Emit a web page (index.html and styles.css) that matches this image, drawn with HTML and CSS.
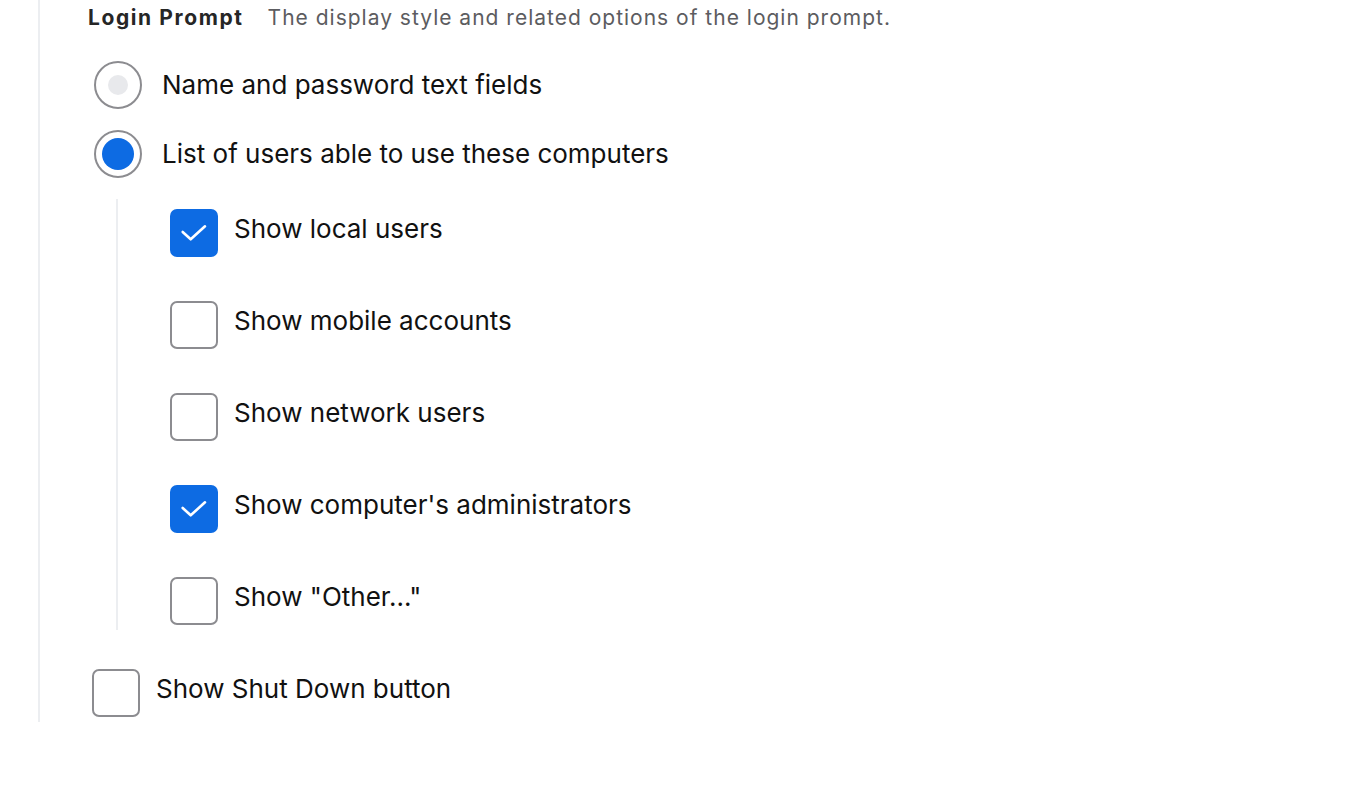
FILE: index.html
```html
<!DOCTYPE html>
<html lang="en">
<head>
    <meta charset="UTF-8">
    <title>Login Prompt</title>
    <link rel="stylesheet" href="styles.css">
</head>
<body>
    <div class="panel">
        <div class="section-head">
            <span class="section-title">Login Prompt</span>
            <span class="section-desc">The display style and related options of the login prompt.</span>
        </div>

        <div class="radio-list">
            <label class="radio-row">
                <span class="radio"><span class="dot"></span></span>
                <span class="row-text">Name and password text fields</span>
            </label>
            <label class="radio-row">
                <span class="radio checked"><span class="dot"></span></span>
                <span class="row-text">List of users able to use these computers</span>
            </label>
        </div>

        <div class="sub-list">
            <label class="check-row">
                <span class="box checked">
                    <svg width="48" height="48" viewBox="0 0 48 48"><path d="M12.7 23 L20.7 30.3 L35 17.3" fill="none" stroke="#fff" stroke-width="2.6" stroke-linecap="round" stroke-linejoin="round"/></svg>
                </span>
                <span class="row-text">Show local users</span>
            </label>
            <label class="check-row">
                <span class="box"></span>
                <span class="row-text">Show mobile accounts</span>
            </label>
            <label class="check-row">
                <span class="box"></span>
                <span class="row-text">Show network users</span>
            </label>
            <label class="check-row">
                <span class="box checked">
                    <svg width="48" height="48" viewBox="0 0 48 48"><path d="M12.7 23 L20.7 30.3 L35 17.3" fill="none" stroke="#fff" stroke-width="2.6" stroke-linecap="round" stroke-linejoin="round"/></svg>
                </span>
                <span class="row-text">Show computer's administrators</span>
            </label>
            <label class="check-row">
                <span class="box"></span>
                <span class="row-text">Show "Other..."</span>
            </label>
        </div>

        <label class="check-row shutdown">
            <span class="box"></span>
            <span class="row-text">Show Shut Down button</span>
        </label>
    </div>
</body>
</html>
```

FILE: styles.css
```css
body {
    margin: 0;
    background: #fff;
    font-family: Inter, "Open Sans", sans-serif;
    color: #111;
}

.panel {
    margin-left: 38px;
    border-left: 2px solid #eceef1;
    padding-left: 48px;
    height: 722px;
    box-sizing: border-box;
}

.section-head {
    display: flex;
    align-items: baseline;
    gap: 24px;
    height: 34px;
    line-height: 35px;
    font-size: 21px;
}

.section-title {
    font-weight: 700;
    color: #262626;
    letter-spacing: 1.6px;
}

.section-desc {
    color: #5c5c60;
    letter-spacing: 1px;
}

.radio-list {
    display: flex;
    flex-direction: column;
    gap: 21px;
    margin-top: 27px;
    padding-left: 6px;
}

.radio-row, .check-row {
    display: flex;
    align-items: center;
    height: 48px;
}

.row-text {
    font-size: 26px;
}

.radio-row .row-text {
    margin-bottom: 2px;
}

.check-row .row-text {
    margin-bottom: 10px;
}

.radio {
    width: 48px;
    height: 48px;
    box-sizing: border-box;
    border: 2px solid #8c8c90;
    border-radius: 50%;
    display: flex;
    align-items: center;
    justify-content: center;
    margin-right: 20px;
}

.radio .dot {
    width: 20px;
    height: 20px;
    border-radius: 50%;
    background: #e8e9ec;
}

.radio.checked .dot {
    width: 32px;
    height: 32px;
    background: #0d6be3;
}

.sub-list {
    margin: 21px 0 0 28px;
    border-left: 2px solid #eceef1;
    padding: 10px 0 5px 52px;
    display: flex;
    flex-direction: column;
    gap: 44px;
}

.box {
    width: 48px;
    height: 48px;
    box-sizing: border-box;
    border: 2px solid #8c8c90;
    border-radius: 7px;
    margin-right: 16px;
    flex-shrink: 0;
}

.box.checked {
    border: none;
    background: #0d6be3;
}

.box svg {
    display: block;
}

.shutdown {
    margin: 39px 0 0 4px;
}
```
